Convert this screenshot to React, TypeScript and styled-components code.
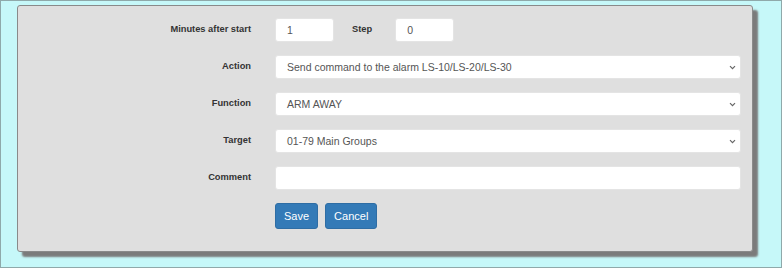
import React from "react";
import styled, { createGlobalStyle } from "styled-components";

const GlobalStyle = createGlobalStyle`
  html, body {
    margin: 0;
    padding: 0;
  }
  body {
    background: #c6f8f9;
    font-family: "Liberation Sans", Arial, sans-serif;
  }
`;

const Page = styled.div`
  box-sizing: border-box;
  width: 782px;
  height: 268px;
  border: 1px solid #8fa9aa;
  padding: 4px 0 0 16px;
`;

const Panel = styled.div`
  box-sizing: border-box;
  width: 736px;
  height: 247px;
  background: #dfdfdf;
  border: 1px solid #8a8a8a;
  border-radius: 3px;
  box-shadow: 5px 5px 2px #7b7b7b;
  padding: 12px 11px 0 0;
`;

const Form = styled.div`
  display: grid;
  grid-template-columns: 233px 1fr;
  column-gap: 24px;
  row-gap: 13px;
  align-items: center;
`;

const Label = styled.label`
  text-align: right;
  font-size: 9.3px;
  font-weight: bold;
  color: #333;
  margin-top: -2px;
`;

const Inline = styled.div`
  display: flex;
  align-items: center;
`;

const InlineLabel = styled(Label)`
  margin: -2px 23px 0 18px;
`;

const Field = styled.div<{ $width?: number }>`
  box-sizing: border-box;
  height: 24px;
  width: ${(p) => (p.$width ? `${p.$width}px` : "100%")};
  background: #fff;
  border: 1px solid #e4e4e4;
  border-radius: 3px;
  padding: 0 4px 0 11px;
  display: flex;
  align-items: center;
  justify-content: space-between;
  font-size: 10.5px;
  color: #555;
`;

const Chevron = () => (
  <svg width="7" height="5" viewBox="0 0 7 5">
    <path d="M1 1.2 L3.5 3.7 L6 1.2" fill="none" stroke="#666" strokeWidth="1.2" />
  </svg>
);

const Buttons = styled.div`
  display: flex;
  gap: 7px;
`;

const Button = styled.button`
  box-sizing: border-box;
  height: 26px;
  padding: 0 8px;
  background: #337ab7;
  border: 1px solid #2e6da4;
  border-radius: 3px;
  color: #fff;
  font-family: "Liberation Sans", Arial, sans-serif;
  font-size: 11px;
`;

const Select = ({ value }: { value: string }) => (
  <Field>
    <span>{value}</span>
    <Chevron />
  </Field>
);

export default function App() {
  return (
    <Page>
      <GlobalStyle />
      <Panel>
        <Form>
          <Label>Minutes after start</Label>
          <Inline>
            <Field $width={59}>1</Field>
            <InlineLabel>Step</InlineLabel>
            <Field $width={59}>0</Field>
          </Inline>

          <Label>Action</Label>
          <Select value="Send command to the alarm LS-10/LS-20/LS-30" />

          <Label>Function</Label>
          <Select value="ARM AWAY" />

          <Label>Target</Label>
          <Select value="01-79 Main Groups" />

          <Label>Comment</Label>
          <Field />

          <span />
          <Buttons>
            <Button>Save</Button>
            <Button>Cancel</Button>
          </Buttons>
        </Form>
      </Panel>
    </Page>
  );
}
